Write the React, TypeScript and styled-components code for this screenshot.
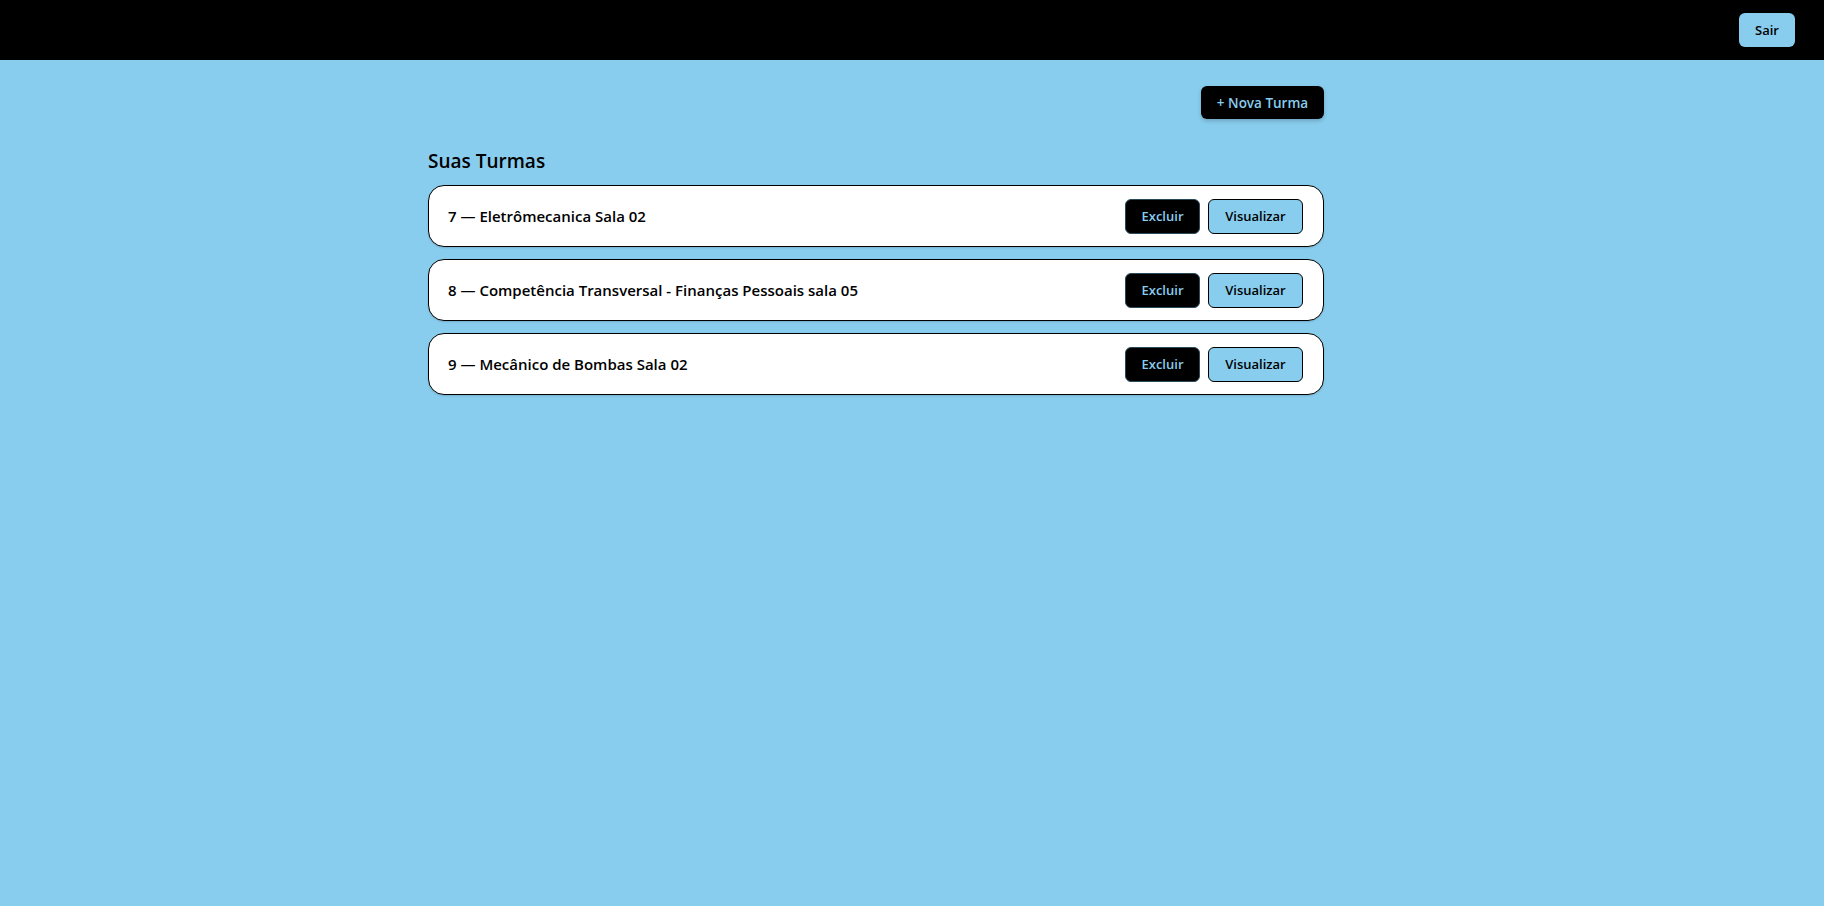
import React from "react";
import styled, { createGlobalStyle } from "styled-components";

const Global = createGlobalStyle`
  html, body { margin: 0; padding: 0; }
  body {
    background: #89cdee;
    font-family: "Open Sans", "Noto Sans", sans-serif;
    color: #000;
    min-height: 906px;
  }
  * { box-sizing: border-box; }
`;

const Header = styled.header`
  height: 60px;
  background: #000;
  display: flex;
  align-items: center;
  justify-content: flex-end;
  padding: 0 29px;
`;

const SairButton = styled.button`
  height: 34px;
  width: 56px;
  border: none;
  border-radius: 6px;
  background: #89cdee;
  color: #000;
  font-family: inherit;
  font-weight: 600;
  font-size: 13px;
  cursor: pointer;
`;

const Main = styled.main`
  padding: 26px 72px 0 0;
`;

const Container = styled.div`
  width: 896px;
  margin: 0 auto;
  display: flex;
  flex-direction: column;
`;

const Toolbar = styled.div`
  display: flex;
  justify-content: flex-end;
`;

const NewButton = styled.button`
  height: 33px;
  width: 123px;
  border: none;
  border-radius: 6px;
  background: #000;
  color: #89cdee;
  font-family: inherit;
  font-weight: 600;
  font-size: 13.5px;
  box-shadow: 0 2px 4px rgba(0, 0, 0, 0.2);
  cursor: pointer;
`;

const Title = styled.h2`
  margin: 29px 0 11px;
  font-size: 19px;
  font-weight: 600;
  line-height: 26px;
`;

const List = styled.div`
  display: flex;
  flex-direction: column;
  gap: 12px;
`;

const Card = styled.div`
  height: 62px;
  background: #fff;
  border: 1px solid #000;
  border-radius: 16px;
  display: flex;
  align-items: center;
  justify-content: space-between;
  padding: 0 20px 0 19px;
  box-shadow: 0 1px 2px rgba(0, 0, 0, 0.15);
`;

const CardName = styled.span`
  font-size: 15px;
  font-weight: 600;
`;

const Actions = styled.div`
  display: flex;
  gap: 8px;
`;

const ActionButton = styled.button<{ $variant: "dark" | "light" }>`
  height: 35px;
  padding: 0 14px;
  min-width: ${(p) => (p.$variant === "dark" ? "75px" : "95px")};
  border-radius: 6px;
  border: 1px solid ${(p) => (p.$variant === "dark" ? "#2a4a5a" : "#000")};
  background: ${(p) => (p.$variant === "dark" ? "#000" : "#89cdee")};
  color: ${(p) => (p.$variant === "dark" ? "#89cdee" : "#000")};
  font-family: inherit;
  font-weight: 600;
  font-size: 13px;
  cursor: pointer;
`;

const turmas = [
  { id: 7, nome: "Eletrômecanica Sala 02" },
  { id: 8, nome: "Competência Transversal - Finanças Pessoais sala 05" },
  { id: 9, nome: "Mecânico de Bombas Sala 02" },
];

export default function App() {
  return (
    <>
      <Global />
      <Header>
        <SairButton>Sair</SairButton>
      </Header>
      <Main>
        <Container>
          <Toolbar>
            <NewButton>+ Nova Turma</NewButton>
          </Toolbar>
          <Title>Suas Turmas</Title>
          <List>
            {turmas.map((t) => (
              <Card key={t.id}>
                <CardName>
                  {t.id} — {t.nome}
                </CardName>
                <Actions>
                  <ActionButton $variant="dark">Excluir</ActionButton>
                  <ActionButton $variant="light">Visualizar</ActionButton>
                </Actions>
              </Card>
            ))}
          </List>
        </Container>
      </Main>
    </>
  );
}
